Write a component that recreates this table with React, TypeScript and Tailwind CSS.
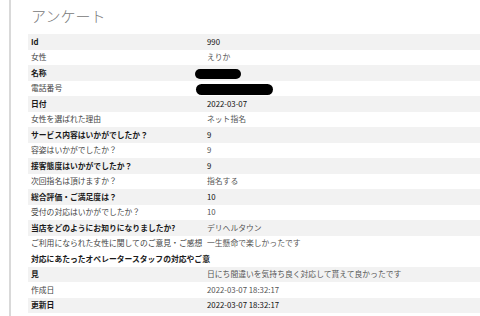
import React from "react";

interface Row {
  label: string;
  value?: string;
  shaded: boolean;
  strongLabel?: boolean;
  strongValue?: boolean;
  redact?: "short" | "long";
}

const rows: Row[] = [
  { label: "Id", value: "990", shaded: true, strongLabel: true, strongValue: true },
  { label: "女性", value: "えりか", shaded: false },
  { label: "名称", shaded: true, strongLabel: true, redact: "short" },
  { label: "電話番号", shaded: false, redact: "long" },
  { label: "日付", value: "2022-03-07", shaded: true, strongLabel: true, strongValue: true },
  { label: "女性を選ばれた理由", value: "ネット指名", shaded: false },
  { label: "サービス内容はいかがでしたか？", value: "9", shaded: true, strongLabel: true, strongValue: true },
  { label: "容姿はいかがでしたか？", value: "9", shaded: false },
  { label: "接客態度はいかがでしたか？", value: "9", shaded: true, strongLabel: true, strongValue: true },
  { label: "次回指名は頂けますか？", value: "指名する", shaded: false },
  { label: "総合評価・ご満足度は？", value: "10", shaded: true, strongLabel: true, strongValue: true },
  { label: "受付の対応はいかがでしたか？", value: "10", shaded: false },
  { label: "当店をどのようにお知りになりましたか?", value: "デリヘルタウン", shaded: true, strongLabel: true },
  { label: "ご利用になられた女性に関してのご意見・ご感想", value: "一生懸命で楽しかったです", shaded: false },
  { label: "対応にあたったオペレータースタッフの対応やご意", shaded: false, strongLabel: true },
  { label: "見", value: "日にち間違いを気持ち良く対応して貰えて良かったです", shaded: true, strongLabel: true },
  { label: "作成日", value: "2022-03-07 18:32:17", shaded: false },
  { label: "更新日", value: "2022-03-07 18:32:17", shaded: true, strongLabel: true, strongValue: true },
];

const SurveyRow: React.FC<{ row: Row }> = ({ row }) => {
  return (
    <div
      className={
        "flex items-center h-[15.5px] pl-[3px] text-[7.8px] leading-none " +
        (row.shaded ? "bg-[#f2f2f2]" : "bg-white")
      }
    >
      <div
        className={
          "w-[176px] shrink-0 whitespace-nowrap " +
          (row.strongLabel ? "font-bold text-[#1a1a1a]" : "text-[#444]")
        }
      >
        {row.label}
      </div>
      {row.redact === "short" && (
        <div className="-ml-[12px] mt-[3px] w-[46px] h-[10px] rounded-full bg-black" />
      )}
      {row.redact === "long" && (
        <div className="-ml-[11px] mt-[2px] w-[77px] h-[11px] rounded-full bg-black" />
      )}
      {row.value !== undefined && (
        <div
          className={
            "whitespace-nowrap " +
            (row.strongValue ? "text-[#111]" : "text-[#555]")
          }
        >
          {row.value}
        </div>
      )}
    </div>
  );
};

export default function App() {
  return (
    <div
      className="w-[480px] h-[316px] bg-white overflow-hidden"
      style={{ fontFamily: '"Noto Sans CJK JP", "Noto Sans", sans-serif' }}
    >
      <div className="ml-[9px] h-full border-l-2 border-[#d9d9d9] pl-[17px]">
        <h1 className="h-[34px] flex items-center pl-[3px] pb-[1px] text-[15px] font-light text-[#777]">
          アンケート
        </h1>
        <div className="flex flex-col">
          {rows.map((row, i) => (
            <SurveyRow key={i} row={row} />
          ))}
        </div>
      </div>
    </div>
  );
}
